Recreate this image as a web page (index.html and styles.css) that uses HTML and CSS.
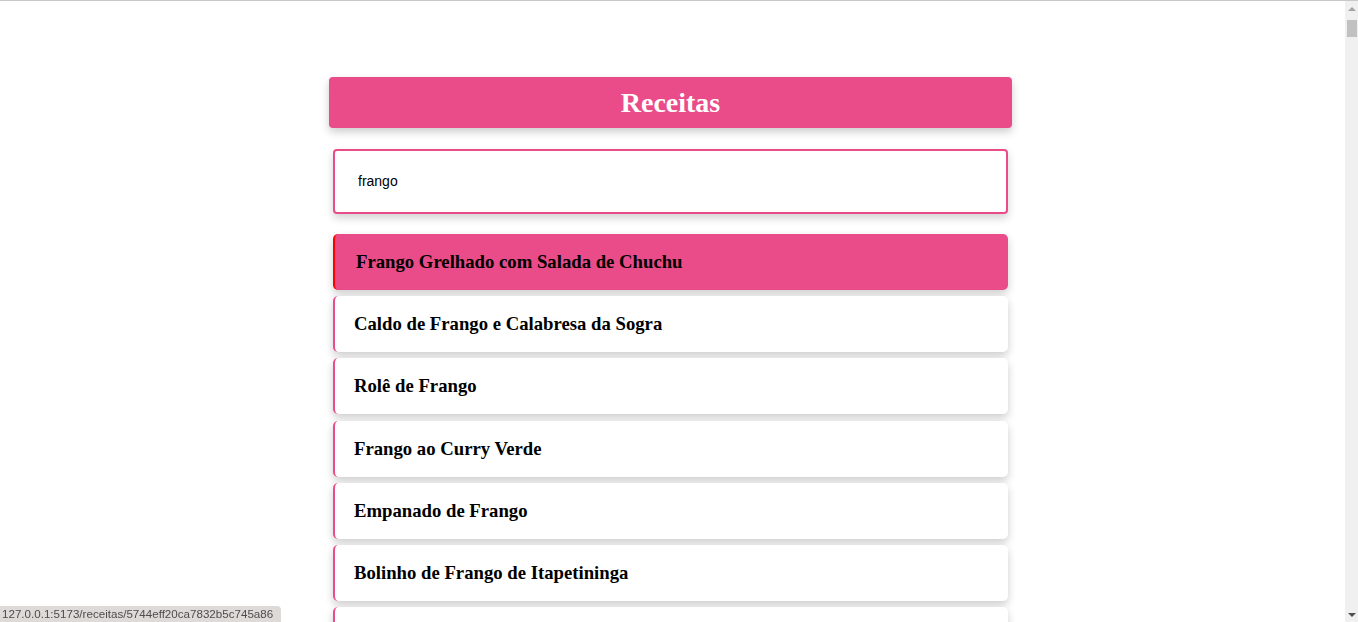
FILE: index.html
```html
<!DOCTYPE html>
<html lang="pt-BR">
<head>
<meta charset="utf-8">
<title>Receitas</title>
<link rel="stylesheet" href="styles.css">
</head>
<body>
<div class="topline"></div>
<div class="viewport">
  <main class="page">
    <h1 class="title">Receitas</h1>
    <div class="search"><span class="search-text">frango</span></div>
    <ul class="list">
      <li class="item active"><h3>Frango Grelhado com Salada de Chuchu</h3></li>
      <li class="item"><h3>Caldo de Frango e Calabresa da Sogra</h3></li>
      <li class="item"><h3>Rolê de Frango</h3></li>
      <li class="item"><h3>Frango ao Curry Verde</h3></li>
      <li class="item"><h3>Empanado de Frango</h3></li>
      <li class="item"><h3>Bolinho de Frango de Itapetininga</h3></li>
      <li class="item"><h3>Strogonoff de Frango</h3></li>
    </ul>
  </main>
  <div class="scrollbar">
    <div class="arrow up"></div>
    <div class="track"><div class="thumb"></div></div>
    <div class="arrow down"></div>
  </div>
</div>
<div class="status">127.0.0.1:5173/receitas/5744eff20ca7832b5c745a86</div>
</body>
</html>
```
FILE: styles.css
```css
html, body {
  margin: 0;
  padding: 0;
  background: #ffffff;
  height: 100%;
  overflow: hidden;
}
body {
  font-family: "Liberation Serif", "Times New Roman", serif;
}
.topline {
  position: fixed;
  top: 0;
  left: 0;
  right: 0;
  height: 1px;
  background: #c9c9c9;
  z-index: 5;
}
.viewport {
  display: flex;
  height: 100%;
}
.page {
  flex: 1;
  min-width: 0;
  display: flex;
  flex-direction: column;
  align-items: center;
  padding-top: 77px;
  overflow: hidden;
}
.title {
  width: 683px;
  flex-shrink: 0;
  margin: 0;
  height: 51px;
  line-height: 51px;
  background: #e94c89;
  color: #ffffff;
  font-size: 28px;
  font-weight: bold;
  text-align: center;
  border-radius: 4px;
  box-shadow: 0 4px 8px rgba(0, 0, 0, 0.2);
}
.search {
  width: 675px;
  box-sizing: border-box;
  flex-shrink: 0;
  margin-top: 21px;
  height: 65px;
  border: 2px solid #e94c89;
  border-radius: 4px;
  box-shadow: 0 4px 8px rgba(0, 0, 0, 0.18);
  display: flex;
  align-items: center;
  padding: 0 23px;
  background: #ffffff;
}
.search-text {
  font-family: "Liberation Sans", Arial, sans-serif;
  font-size: 14px;
  color: #000000;
  margin-top: -1px;
}
.list {
  width: 675px;
  list-style: none;
  margin: 20px 0 0;
  padding: 0;
  display: flex;
  flex-direction: column;
  gap: 6.2px;
  flex-shrink: 0;
}
.item {
  height: 56px;
  flex-shrink: 0;
  box-sizing: border-box;
  border-left: 2px solid #e94c89;
  border-radius: 5px;
  background: #ffffff;
  box-shadow: 0 4px 8px rgba(0, 0, 0, 0.2);
  display: flex;
  align-items: center;
  padding-left: 19px;
}
.item h3 {
  margin: 0;
  font-size: 18.72px;
  font-weight: bold;
  color: #000000;
}
.item.active {
  background: #e94c89;
  border-left-color: #ff0000;
  padding-left: 21px;
}
.scrollbar {
  width: 17px;
  flex-shrink: 0;
  box-sizing: border-box;
  border-left: 4px solid #ffffff;
  background: #f0f0f0;
  display: flex;
  flex-direction: column;
  align-items: center;
  padding-top: 2px;
}
.arrow {
  width: 0;
  height: 0;
  border-left: 4px solid transparent;
  border-right: 4px solid transparent;
  margin: 5px 0 4px;
}
.arrow.up {
  border-bottom: 4px solid #a3a3a3;
}
.arrow.down {
  border-top: 4px solid #505050;
  margin: 4px 0 5px;
}
.track {
  flex: 1;
  align-self: stretch;
  display: flex;
  justify-content: center;
}
.thumb {
  width: 10px;
  height: 17px;
  margin-top: 5px;
  background: #c1c1c1;
}
.status {
  position: fixed;
  left: 0;
  bottom: 0;
  height: 16px;
  line-height: 16px;
  padding: 0 8px 0 2px;
  background: #dedad7;
  color: #4d4d4d;
  font-family: "Liberation Sans", Arial, sans-serif;
  font-size: 11.6px;
  border-top-right-radius: 4px;
  z-index: 5;
}
```
